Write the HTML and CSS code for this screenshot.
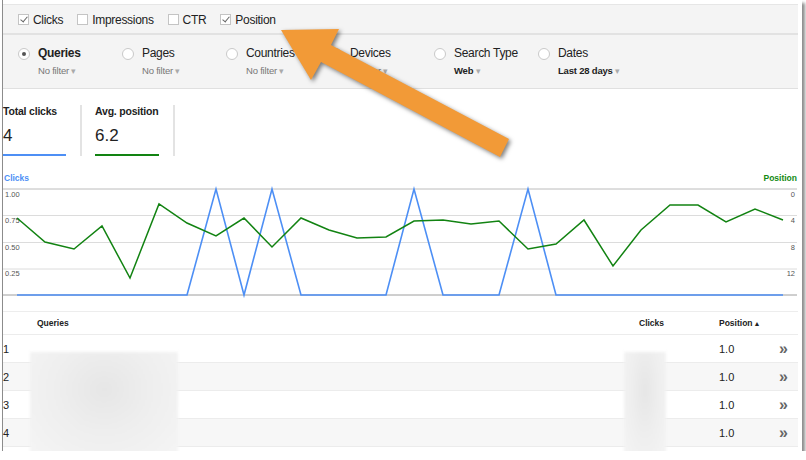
FILE: index.html
```html
<!DOCTYPE html>
<html lang="en">
<head>
  <meta charset="UTF-8" />
  <title>Search Analytics</title>
  <link rel="stylesheet" href="styles.css">
</head>
<body>

<div class="shot">
  <div class="metrics">
    <label class="check on"><span class="box"></span>Clicks</label>
    <label class="check"><span class="box"></span>Impressions</label>
    <label class="check"><span class="box"></span>CTR</label>
    <label class="check on"><span class="box"></span>Position</label>
  </div>

  <div class="dims">
    <div class="dim sel">
      <span class="radio"></span>
      <div><div class="dim-name">Queries</div><div class="dim-filter">No filter <i>▾</i></div></div>
    </div>
    <div class="dim">
      <span class="radio"></span>
      <div><div class="dim-name">Pages</div><div class="dim-filter">No filter <i>▾</i></div></div>
    </div>
    <div class="dim">
      <span class="radio"></span>
      <div><div class="dim-name">Countries</div><div class="dim-filter">No filter <i>▾</i></div></div>
    </div>
    <div class="dim">
      <span class="radio"></span>
      <div><div class="dim-name">Devices</div><div class="dim-filter">No filter <i>▾</i></div></div>
    </div>
    <div class="dim">
      <span class="radio"></span>
      <div><div class="dim-name">Search Type</div><div class="dim-filter set">Web <i>▾</i></div></div>
    </div>
    <div class="dim">
      <span class="radio"></span>
      <div><div class="dim-name">Dates</div><div class="dim-filter set">Last 28 days <i>▾</i></div></div>
    </div>
  </div>

  <div class="stats">
    <div class="stat blue">
      <div class="stat-label">Total clicks</div>
      <div class="stat-value">4</div>
    </div>
    <div class="stat-sep"></div>
    <div class="stat green">
      <div class="stat-label">Avg. position</div>
      <div class="stat-value">6.2</div>
    </div>
    <div class="stat-sep"></div>
  </div>

  <svg class="chart" width="795" height="130" viewBox="3 170 795 130">
    <text x="4" y="182" class="axis-title" fill="#4d8ff5">Clicks</text>
    <text x="797" y="182" class="axis-title" fill="#138a13" text-anchor="end">Position</text>

    <line x1="3" y1="190" x2="797" y2="190" stroke="#bcbcbc" />
    <line x1="3" y1="216.5" x2="797" y2="216.5" stroke="#dcdcdc" />
    <line x1="3" y1="243.5" x2="797" y2="243.5" stroke="#dcdcdc" />
    <line x1="3" y1="270" x2="797" y2="270" stroke="#dcdcdc" />
    <line x1="3" y1="296" x2="797" y2="296" stroke="#9e9e9e" />

    <text x="5" y="198" class="tick">1.00</text>
    <text x="5" y="224" class="tick">0.75</text>
    <text x="5" y="251" class="tick">0.50</text>
    <text x="5" y="277" class="tick">0.25</text>
    <text x="795" y="198" class="tick" text-anchor="end">0</text>
    <text x="795" y="224" class="tick" text-anchor="end">4</text>
    <text x="795" y="251" class="tick" text-anchor="end">8</text>
    <text x="795" y="277" class="tick" text-anchor="end">12</text>

    <polyline fill="none" stroke="#4d8ff5" stroke-width="1.6"
      points="17,296 187,296 216,190 244,296 272,190 301,296 386,296 414,190 443,296 499,296 528,190 556,296 783,296" />
    <polyline fill="none" stroke="#128312" stroke-width="1.5"
      points="17,219 45,243 74,250 102,227 130,279 159,205 187,224 216,237 244,219 272,248 301,219 329,231 357,239 386,238 414,222 443,221 471,225 499,222 528,250 556,245 584,221 613,267 641,231 670,206 698,206 726,223 755,210 783,221" />
  </svg>

  <div class="results">
    <div class="row head">
      <div class="c-num"></div>
      <div class="c-query">Queries</div>
      <div class="c-clicks">Clicks</div>
      <div class="c-pos">Position<span class="sort">▲</span></div>
      <div class="c-more"></div>
    </div>
    <div class="row"><div class="c-num">1</div><div class="c-query"></div><div class="c-clicks"></div><div class="c-pos">1.0</div><div class="c-more">»</div></div>
    <div class="row alt"><div class="c-num">2</div><div class="c-query"></div><div class="c-clicks"></div><div class="c-pos">1.0</div><div class="c-more">»</div></div>
    <div class="row"><div class="c-num">3</div><div class="c-query"></div><div class="c-clicks"></div><div class="c-pos">1.0</div><div class="c-more">»</div></div>
    <div class="row alt"><div class="c-num">4</div><div class="c-query"></div><div class="c-clicks"></div><div class="c-pos">1.0</div><div class="c-more">»</div></div>

    <!-- redacted values -->
    <div class="blur blur-query"></div>
    <div class="blur blur-clicks"></div>
  </div>

  <svg class="arrow" width="806" height="460" viewBox="0 0 806 460">
    <polygon fill="#f29a37" points="281,30 339,29 331,45 509,139 500,157 321,62 311,80" />
  </svg>
</div>

</body>
</html>
```

FILE: styles.css
```css
body {
  margin: 0;
  background: #fff;
  font-family: "Liberation Sans", Arial, sans-serif;
  color: #222;
}
.shot {
  position: relative;
  box-sizing: border-box;
  width: 800px;
  height: 451px;
  margin-left: 2px;
  padding: 4px 4px 0 0;
  background: #fff;
  border-left: 1px solid #8c8c8c;
  box-shadow: 3px 3px 3px rgba(0,0,0,0.45);
}

/* metric toggles */
.metrics {
  display: flex;
  align-items: center;
  gap: 14px;
  box-sizing: border-box;
  height: 31px;
  padding: 1px 0 0 15px;
  background: #f4f4f4;
  border-top: 1px solid #e6e6e6;
  border-bottom: 2px solid #e2e2e2;
  font-size: 12px;
  letter-spacing: -0.3px;
}
.check {
  display: flex;
  align-items: center;
}
.box {
  position: relative;
  width: 9px;
  height: 9px;
  margin-right: 4px;
  background: #fff;
  border: 1px solid #c4c4c4;
}
.check.on .box::after {
  content: "";
  position: absolute;
  left: 3px;
  top: 0;
  width: 3px;
  height: 6px;
  border: solid #666;
  border-width: 0 1px 1px 0;
  transform: rotate(40deg);
}

/* dimension picker */
.dims {
  display: flex;
  height: 53px;
  padding-left: 15px;
  background: #f4f4f4;
  border-bottom: 1px solid #e0e0e0;
}
.dim {
  display: flex;
  width: 104px;
  padding-top: 11px;
}
.radio {
  position: relative;
  flex: none;
  width: 10px;
  height: 10px;
  margin: 2px 8px 0 0;
  border: 1px solid #c9c9c9;
  border-radius: 50%;
  background: #fff;
}
.dim.sel .radio::after {
  content: "";
  position: absolute;
  left: 3px;
  top: 3px;
  width: 4px;
  height: 4px;
  border-radius: 50%;
  background: #555;
}
.dim-name {
  font-size: 12px;
  letter-spacing: -0.3px;
  white-space: nowrap;
}
.dim.sel .dim-name {
  font-weight: bold;
}
.dim-filter {
  margin-top: 5px;
  font-size: 9.5px;
  letter-spacing: -0.2px;
  color: #777;
  white-space: nowrap;
}
.dim-filter.set {
  color: #222;
  font-weight: bold;
}
.dim-filter i {
  font-style: normal;
  font-weight: normal;
  color: #aaa;
  font-size: 9px;
}

/* totals */
.stats {
  display: flex;
  height: 80px;
  padding-top: 16px;
  box-sizing: border-box;
}
.stat {
  width: 63px;
  height: 51px;
  box-sizing: border-box;
}
.stat.blue { border-bottom: 2px solid #4d8ff5; }
.stat.green { width: 64px; border-bottom: 2px solid #128312; }
.stat-label {
  font-size: 10.5px;
  font-weight: bold;
  letter-spacing: -0.2px;
}
.stat-value {
  margin-top: 9px;
  font-size: 17px;
}
.stat-sep {
  width: 2px;
  height: 51px;
  margin: 0 13px 0 14px;
  background: #e3e3e3;
}

/* chart */
.chart {
  display: block;
}
.axis-title {
  font-family: "Liberation Sans", Arial, sans-serif;
  font-size: 8.5px;
  font-weight: bold;
}
.tick {
  font-family: "Liberation Sans", Arial, sans-serif;
  font-size: 7.5px;
  fill: #555;
}

/* table */
.results {
  position: relative;
}
.row {
  display: flex;
  align-items: center;
  box-sizing: border-box;
  height: 28px;
  border-bottom: 1px solid #ececec;
  font-size: 11px;
}
.row.alt {
  background: #f7f7f7;
}
.row.head {
  height: 24px;
  margin-top: 12px;
  border-top: 1px solid #ededed;
  font-size: 8.5px;
  font-weight: bold;
}
.c-num { width: 34px; }
.c-query { flex: 1; }
.c-clicks { width: 80px; }
.c-pos { width: 60px; }
.c-more {
  width: 19px;
  color: #666;
  font-size: 16px;
  font-weight: bold;
  line-height: 1;
}
.sort {
  font-size: 7px;
  margin-left: 1px;
}
.blur {
  position: absolute;
  background: radial-gradient(ellipse at 50% 35%, #e6e6e6 0%, #eeeeee 45%, #f5f5f5 100%);
  filter: blur(1.5px);
}
.blur-query {
  left: 27px;
  top: 41px;
  width: 148px;
  height: 107px;
}
.blur-clicks {
  left: 621px;
  top: 41px;
  width: 42px;
  height: 110px;
}

/* call-out */
.arrow {
  position: absolute;
  left: -3px;
  top: 0;
  pointer-events: none;
  filter: drop-shadow(2px 2px 2px rgba(0,0,0,0.5));
}
```
